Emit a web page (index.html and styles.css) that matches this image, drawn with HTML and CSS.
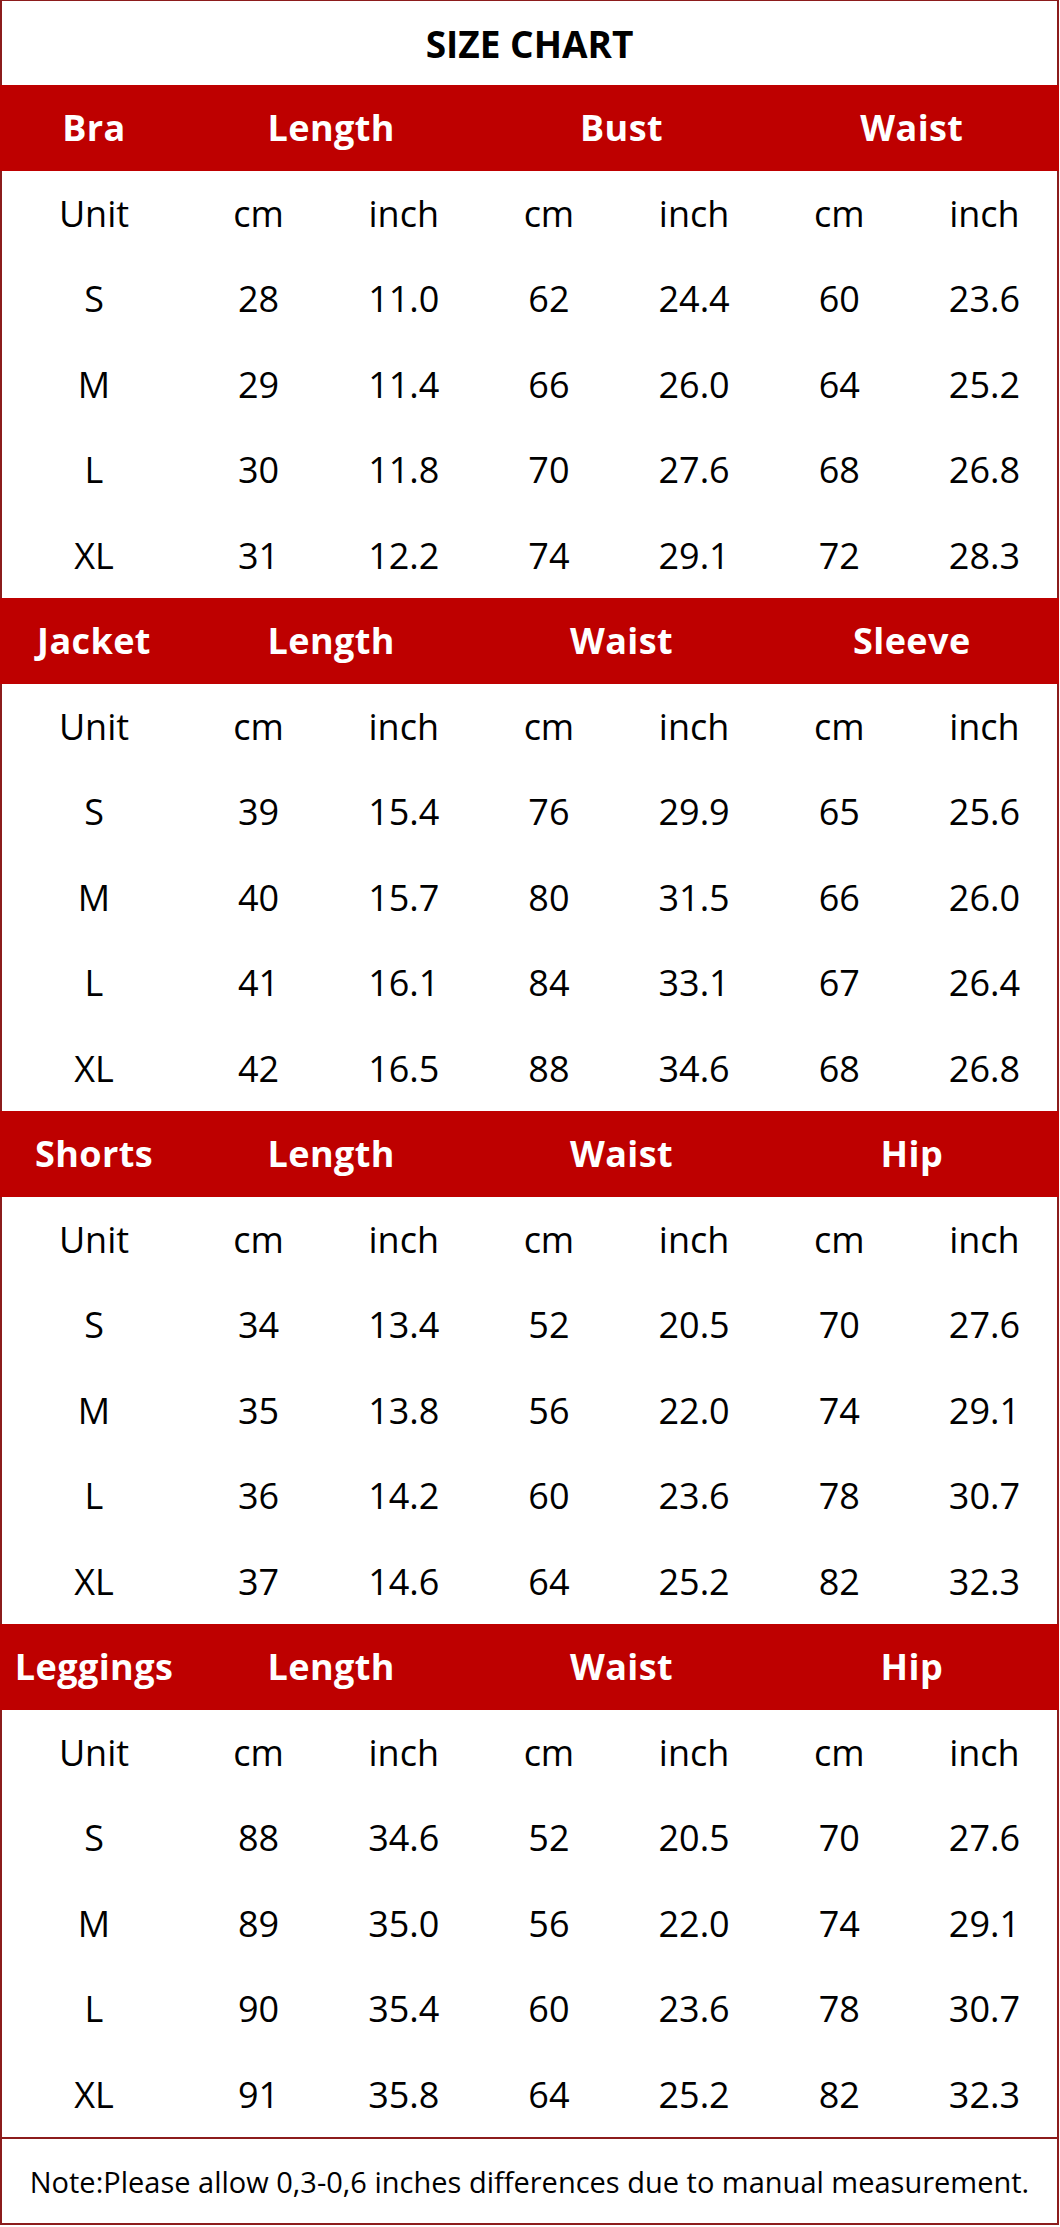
FILE: index.html
```html
<!DOCTYPE html>
<html lang="en">
<head>
<meta charset="utf-8">
<title>Size Chart</title>
<link rel="stylesheet" href="styles.css">
</head>
<body>
<div class="chart">
  <div class="title">SIZE CHART</div>

  <div class="head"><span>Bra</span><span>Length</span><span>Bust</span><span>Waist</span></div>
  <div class="row"><span>Unit</span><span>cm</span><span>inch</span><span>cm</span><span>inch</span><span>cm</span><span>inch</span></div>
  <div class="row"><span>S</span><span>28</span><span>11.0</span><span>62</span><span>24.4</span><span>60</span><span>23.6</span></div>
  <div class="row"><span>M</span><span>29</span><span>11.4</span><span>66</span><span>26.0</span><span>64</span><span>25.2</span></div>
  <div class="row"><span>L</span><span>30</span><span>11.8</span><span>70</span><span>27.6</span><span>68</span><span>26.8</span></div>
  <div class="row"><span>XL</span><span>31</span><span>12.2</span><span>74</span><span>29.1</span><span>72</span><span>28.3</span></div>

  <div class="head"><span>Jacket</span><span>Length</span><span>Waist</span><span>Sleeve</span></div>
  <div class="row"><span>Unit</span><span>cm</span><span>inch</span><span>cm</span><span>inch</span><span>cm</span><span>inch</span></div>
  <div class="row"><span>S</span><span>39</span><span>15.4</span><span>76</span><span>29.9</span><span>65</span><span>25.6</span></div>
  <div class="row"><span>M</span><span>40</span><span>15.7</span><span>80</span><span>31.5</span><span>66</span><span>26.0</span></div>
  <div class="row"><span>L</span><span>41</span><span>16.1</span><span>84</span><span>33.1</span><span>67</span><span>26.4</span></div>
  <div class="row"><span>XL</span><span>42</span><span>16.5</span><span>88</span><span>34.6</span><span>68</span><span>26.8</span></div>

  <div class="head"><span>Shorts</span><span>Length</span><span>Waist</span><span>Hip</span></div>
  <div class="row"><span>Unit</span><span>cm</span><span>inch</span><span>cm</span><span>inch</span><span>cm</span><span>inch</span></div>
  <div class="row"><span>S</span><span>34</span><span>13.4</span><span>52</span><span>20.5</span><span>70</span><span>27.6</span></div>
  <div class="row"><span>M</span><span>35</span><span>13.8</span><span>56</span><span>22.0</span><span>74</span><span>29.1</span></div>
  <div class="row"><span>L</span><span>36</span><span>14.2</span><span>60</span><span>23.6</span><span>78</span><span>30.7</span></div>
  <div class="row"><span>XL</span><span>37</span><span>14.6</span><span>64</span><span>25.2</span><span>82</span><span>32.3</span></div>

  <div class="head"><span>Leggings</span><span>Length</span><span>Waist</span><span>Hip</span></div>
  <div class="row"><span>Unit</span><span>cm</span><span>inch</span><span>cm</span><span>inch</span><span>cm</span><span>inch</span></div>
  <div class="row"><span>S</span><span>88</span><span>34.6</span><span>52</span><span>20.5</span><span>70</span><span>27.6</span></div>
  <div class="row"><span>M</span><span>89</span><span>35.0</span><span>56</span><span>22.0</span><span>74</span><span>29.1</span></div>
  <div class="row"><span>L</span><span>90</span><span>35.4</span><span>60</span><span>23.6</span><span>78</span><span>30.7</span></div>
  <div class="row"><span>XL</span><span>91</span><span>35.8</span><span>64</span><span>25.2</span><span>82</span><span>32.3</span></div>

  <div class="note">Note:Please allow 0,3-0,6 inches differences due to manual measurement.</div>
</div>
</body>
</html>
```

FILE: styles.css
```css
html, body {
  margin: 0;
  padding: 0;
  background: #ffffff;
}

.chart {
  width: 1059px;
  height: 2225px;
  box-sizing: border-box;
  border: 2px solid #8c1c1c;
  border-top-width: 1px;
  display: flex;
  flex-direction: column;
  font-family: "Open Sans", "Noto Sans", sans-serif;
  color: #000000;
}

.title {
  height: 84px;
  display: flex;
  align-items: center;
  justify-content: center;
  font-weight: 700;
  font-size: 37px;
  color: #000000;
}

.head,
.row {
  height: 85.5px;
  display: grid;
  align-items: center;
  justify-items: center;
}

.row {
  grid-template-columns: 184px repeat(6, 1fr);
  font-size: 36px;
}

.head {
  grid-template-columns: 184px repeat(3, 2fr);
  background: #be0000;
  color: #ffffff;
  font-weight: 700;
  font-size: 36px;
  letter-spacing: 0.4px;
  margin: 0 -2px;
  padding: 0 2px;
}

.note {
  flex: 1;
  border-top: 2px solid #8c1c1c;
  display: flex;
  align-items: center;
  justify-content: center;
  font-size: 29px;
  color: #000000;
  white-space: nowrap;
}
```
